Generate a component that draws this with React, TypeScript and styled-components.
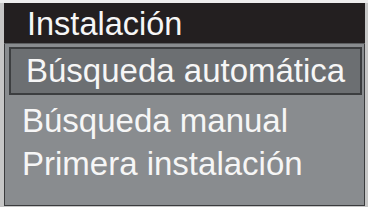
import styled, { createGlobalStyle } from 'styled-components';

const GlobalStyle = createGlobalStyle`
	html, body {
		margin: 0;
		padding: 0;
	}
	body {
		width: 368px;
		height: 207px;
		overflow: hidden;
		background: #d4d4d4;
		font-family: 'Liberation Sans', Arial, sans-serif;
	}
`;

const Screen = styled.div`
	box-sizing: border-box;
	width: 368px;
	height: 207px;
	padding: 3px 3px 1px 4px;
	background: linear-gradient(#ededed 0 3px, #c6c6c6 3px);
	display: flex;
`;

const Panel = styled.div`
	flex: 1;
	display: flex;
	flex-direction: column;
	border: 1px solid #3a3b3d;
	border-top: none;
	background: #898c8f;
`;

const Header = styled.div`
	box-sizing: border-box;
	height: 41px;
	line-height: 38px;
	padding: 2px 0 0 23px;
	margin: 0 -1px;
	background: #231f20;
	color: #f6f6f6;
	font-size: 32.5px;
	border-bottom: 1px solid #5d5f61;
`;

const List = styled.div`
	display: flex;
	flex-direction: column;
	padding: 3px 2px 0 4px;
`;

const Item = styled.div<{ $selected?: boolean }>`
	box-sizing: border-box;
	color: #f6f6f6;
	font-size: 33px;
	white-space: nowrap;
	height: ${p => (p.$selected ? '48px' : '43px')};
	line-height: ${p => (p.$selected ? '44px' : '43px')};
	padding-left: ${p => (p.$selected ? '15px' : '13px')};
	border: ${p => (p.$selected ? '2px solid #3c3e40' : 'none')};
	background: ${p => (p.$selected ? '#6c6f72' : 'transparent')};
	margin-bottom: ${p => (p.$selected ? '4px' : '0')};
`;

const items = ['Búsqueda automática', 'Búsqueda manual', 'Primera instalación'];

export default function App() {
	return (
		<>
			<GlobalStyle />
			<Screen>
				<Panel>
					<Header>Instalación</Header>
					<List>
						{items.map((label, i) => (
							<Item key={label} $selected={i === 0}>
								{label}
							</Item>
						))}
					</List>
				</Panel>
			</Screen>
		</>
	);
}
